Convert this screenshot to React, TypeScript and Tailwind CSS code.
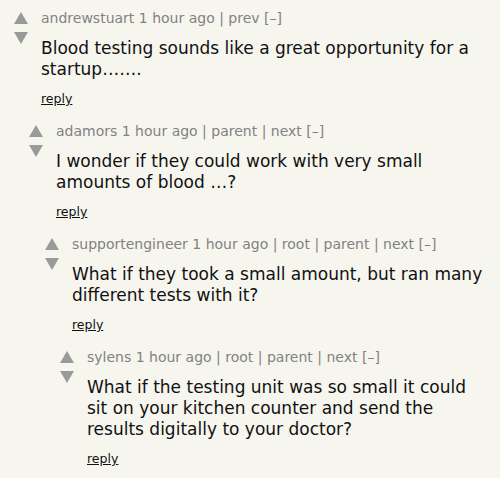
import React from "react";

type C = { user: string; links: string[]; body: string[]; indent: number };

const comments: C[] = [
  { user: "andrewstuart", links: ["prev"], body: ["Blood testing sounds like a great opportunity for a", "startup……."], indent: 0 },
  { user: "adamors", links: ["parent", "next"], body: ["I wonder if they could work with very small", "amounts of blood …?"], indent: 1 },
  { user: "supportengineer", links: ["root", "parent", "next"], body: ["What if they took a small amount, but ran many", "different tests with it?"], indent: 2 },
  { user: "sylens", links: ["root", "parent", "next"], body: ["What if the testing unit was so small it could", "sit on your kitchen counter and send the", "results digitally to your doctor?"], indent: 3 },
];

const indents = ["pl-[14px]", "pl-[29px]", "pl-[45px]", "pl-[60px]"];

function Votes() {
  return (
    <div className="flex flex-col w-[27px] pt-[4px] shrink-0">
      <svg width="14" height="12" viewBox="0 0 14 12" className="block">
        <polygon points="7,0 14,12 0,12" fill="#9a9a9a" />
      </svg>
      <svg width="14" height="12" viewBox="0 0 14 12" className="block mt-[8px]">
        <polygon points="0,0 14,0 7,12" fill="#9a9a9a" />
      </svg>
    </div>
  );
}

export default function App() {
  return (
    <div
      className="w-[500px] h-[478px] bg-[#f6f6ef] overflow-hidden pt-[8px] flex flex-col gap-[14px]"
      style={{ fontFamily: '"DejaVu Sans", Verdana, sans-serif' }}
    >
      {comments.map((c, i) => (
        <div key={i} className={`flex ${indents[c.indent]}`}>
          <Votes />
          <div className="flex flex-col">
            <div className="text-[14px] leading-[20px] text-[#828282] whitespace-nowrap">
              {c.user} 1 hour ago
              {c.links.map((l) => (
                <span key={l}> | {l}</span>
              ))}{" "}
              [–]
            </div>
            <div className="text-[17px] leading-[21px] text-[#111111] mt-[10px]">
              {c.body.map((b, j) => (
                <div key={j}>{b}</div>
              ))}
            </div>
            <div className="text-[12.5px] leading-[16px] text-[#111111] underline mt-[11px]">reply</div>
          </div>
        </div>
      ))}
    </div>
  );
}
